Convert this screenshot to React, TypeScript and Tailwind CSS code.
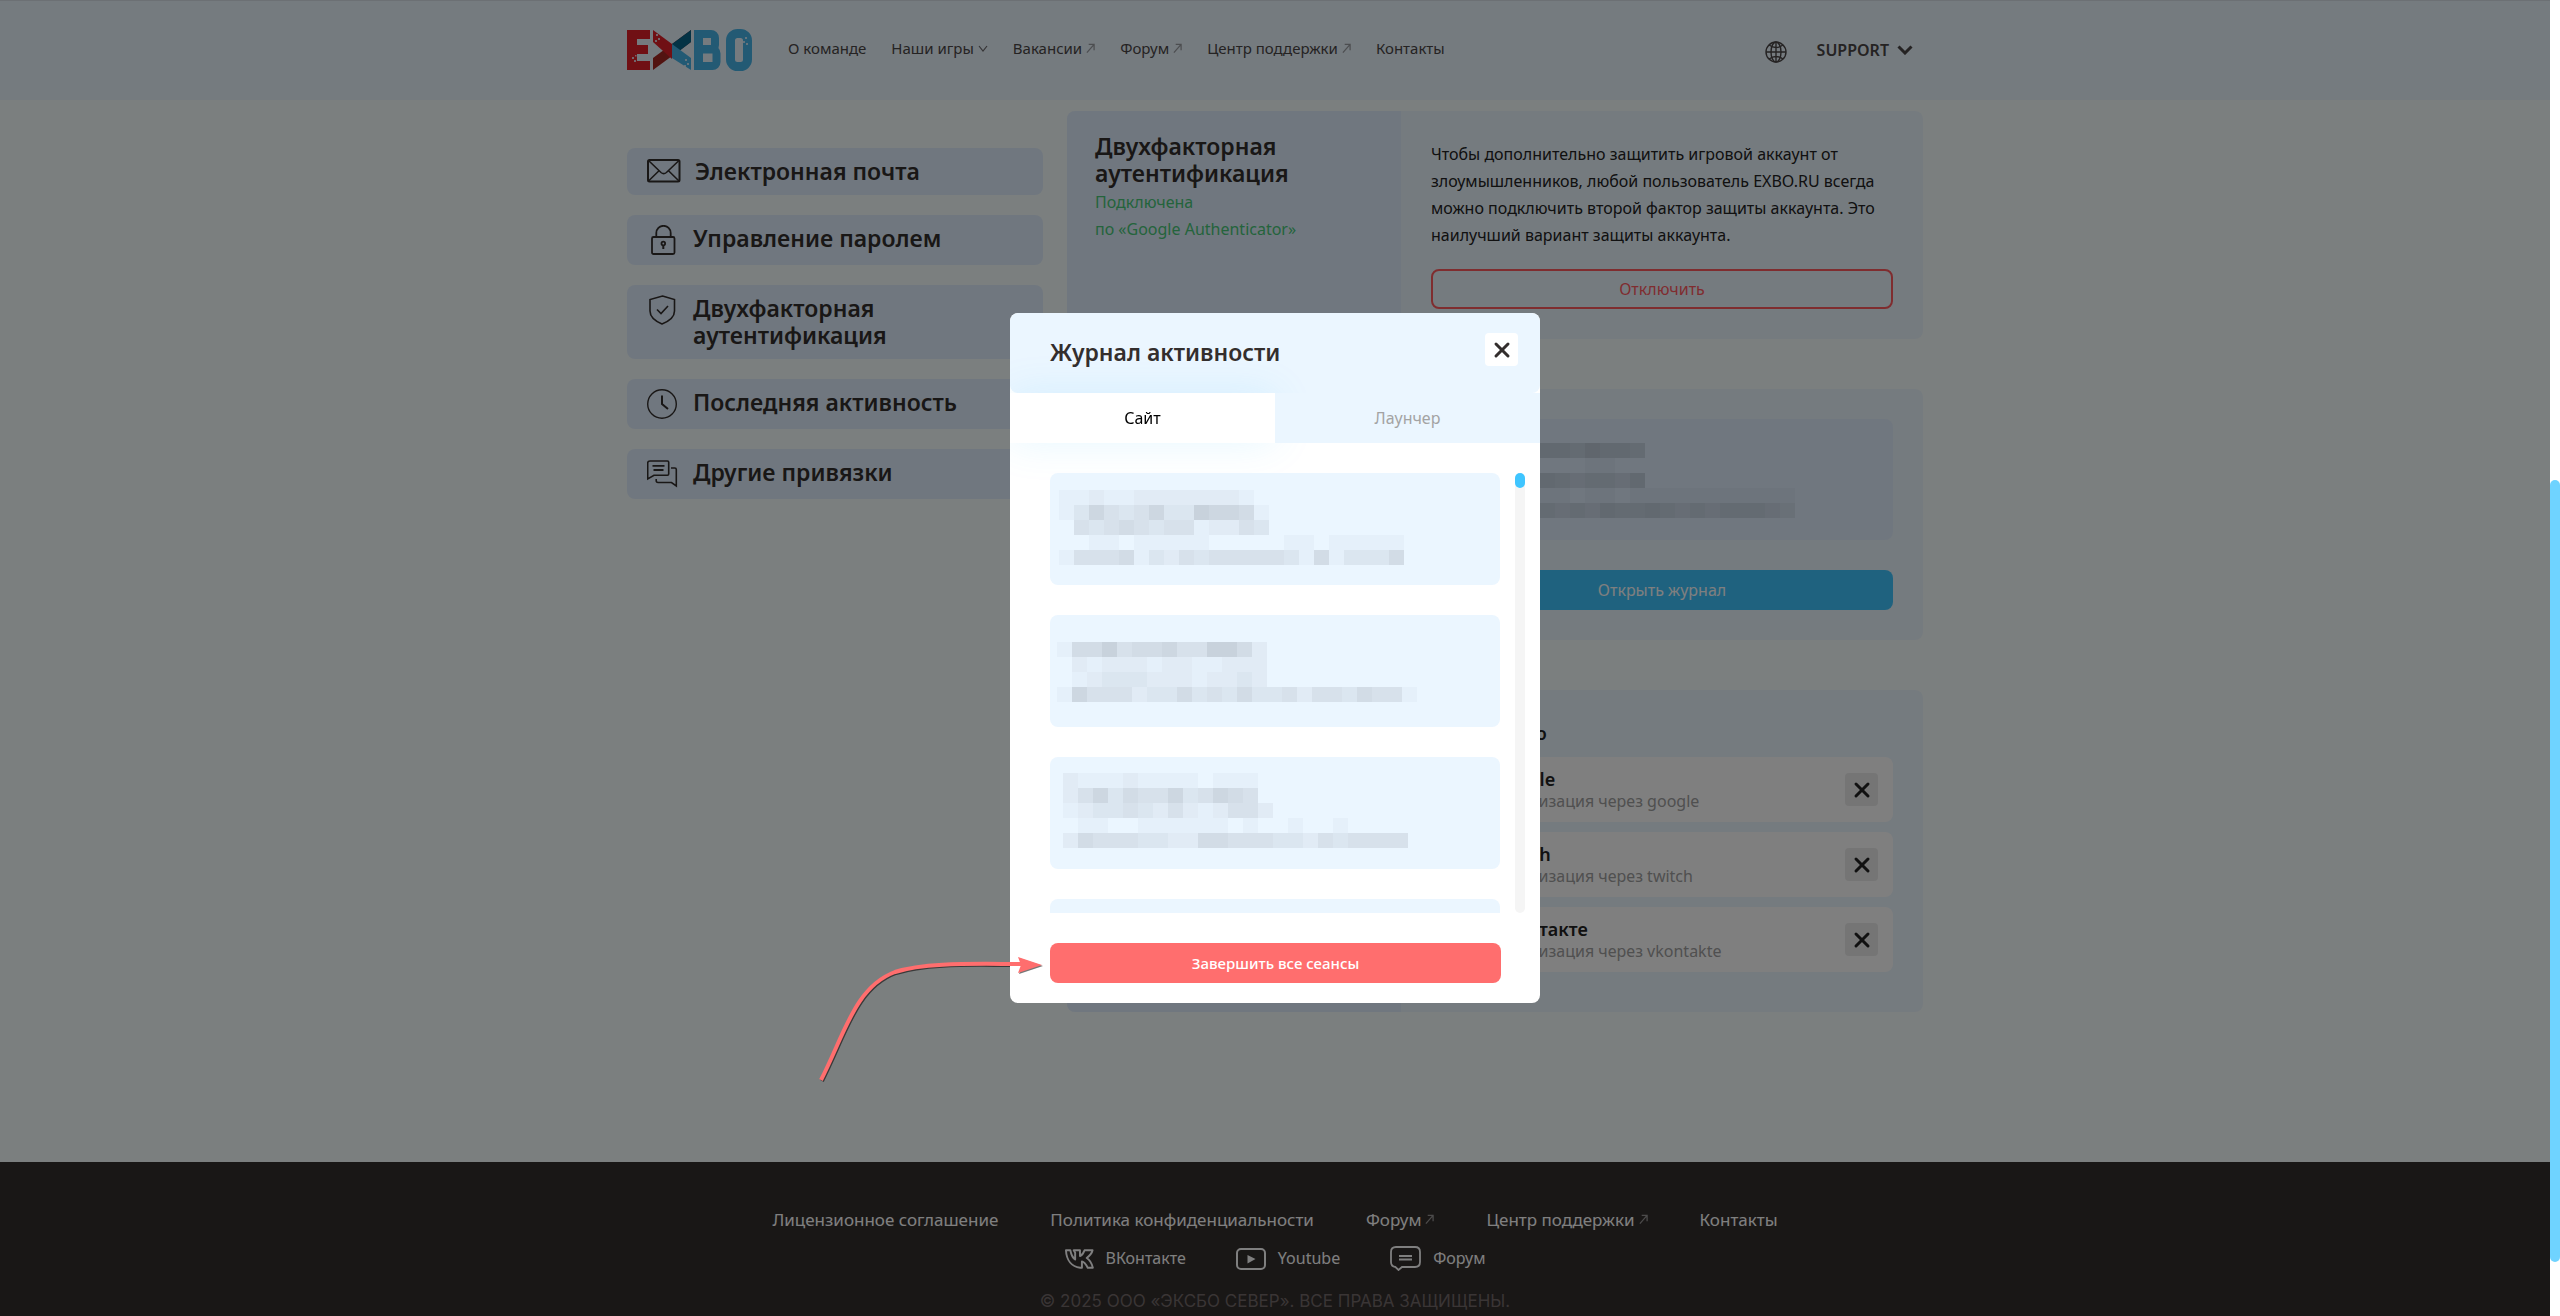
import { useState } from "react"
import { X } from "lucide-react"

const SIDEBAR = [
  { title: "Электронная почта", icon: MailIcon },
  { title: "Управление паролем", icon: LockIcon },
  { title: "Двухфакторная аутентификация", icon: ShieldIcon },
  { title: "Последняя активность", icon: ClockIcon },
  { title: "Другие привязки", icon: ChatIcon },
]

const PROVIDERS = [
  { name: "Google", id: "google" },
  { name: "Twitch", id: "twitch" },
  { name: "ВКонтакте", id: "vkontakte" },
]

// Each digit is the darkness of one censored cell
const SESSIONS = [
  {
    pad: "pl-[9px] pt-[17px]",
    rows: ["1121122222221", "13643463376651", "04345434412243", "00110111110000011011111", "14445132434444431513335"],
  },
  {
    pad: "pl-[7px] pt-[27px]",
    rows: ["15574556447752", "02122212211222", "01233322212232", "164442335343533424435441"],
  },
  {
    pad: "pl-[13px] pt-4",
    rows: ["2111211110111", "2463544634654", "12334324212442", "01100111111010010010000", "25444332255444332434444"],
  },
  { pad: "pl-[9px] pt-[17px]", rows: [] },
]

const LAST_SESSION = ["6655656657665", "0000000001100", "4556656545546", "00001111011011111111111", "45564554546556545455543"]

function Censored({ rows }: { rows: string[] }) {
  return (
    <div aria-hidden="true">
      {rows.map((row, i) => (
        <div key={i} className="flex">
          {row.split("").map((level, j) => (
            <span key={j} className="h-[15px] w-[15px] bg-[#464b5a]" style={{ opacity: Number(level) * 0.03 }} />
          ))}
        </div>
      ))}
    </div>
  )
}

function MailIcon() {
  return (
    <svg width="34" height="24" viewBox="0 0 34 24" fill="none" stroke="currentColor" strokeWidth="2" className="mt-px">
      <rect x="1" y="1" width="31.500" height="21.500" rx="1.500" />
      <path d="M1.500 1.500 14 13.500q2.700 2.200 5.400 0L32 1.500M1.500 22 12 11.800M32 22 21.500 11.800" strokeWidth="1.600" />
    </svg>
  )
}

function LockIcon() {
  return (
    <svg width="32" height="30" viewBox="0 0 32 30" fill="none" stroke="currentColor" strokeWidth="1.800">
      <rect x="5" y="12" width="22.500" height="17" rx="1.500" />
      <path d="M9.300 12V8a7.200 7.200 0 0 1 14.400 0v4" />
      <circle cx="16.300" cy="18.500" r="1.800" />
      <path d="M16.300 20.500V24" strokeWidth="2" />
    </svg>
  )
}

function ShieldIcon() {
  return (
    <svg width="32" height="30" viewBox="0 0 32 30" fill="none" stroke="currentColor" strokeWidth="1.600" className="shrink-0">
      <path d="M15.500 1 27.500 4.500V16c0 6-5 10-12.500 13C8 26 3 22 3 16V4.500Z" />
      <path d="m10 14.500 4 4 7-7.500" />
    </svg>
  )
}

function ClockIcon() {
  return (
    <svg width="32" height="30" viewBox="0 0 32 30" fill="none" stroke="currentColor" strokeWidth="1.400">
      <circle cx="15" cy="15" r="14.300" />
      <path d="M15 6.500V15l6 5" strokeWidth="2" />
    </svg>
  )
}

function ChatIcon() {
  return (
    <svg width="32" height="30" viewBox="0 0 32 30" fill="none" stroke="currentColor" strokeWidth="1.600">
      <path d="M3 2h17.500a1.200 1.200 0 0 1 1.200 1.200V15q0 1.200-1.200 1.200H7L.7 20V4Q.7 2 3 2Z" />
      <path d="M5.500 6.800h12M6.500 11h10" strokeWidth="1.800" />
      <path d="M24 9h3.800q1.500 0 1.500 1.500V27l-4.800-3.500H11q-1.800 0-1.800-2V20" />
    </svg>
  )
}

function ExternalArrow() {
  return (
    <svg width="9" height="11" viewBox="0 0 10 11" fill="none" stroke="currentColor" strokeWidth="1.400" className="opacity-50">
      <path d="M1 10 9 1M3 1h6v6.500" />
    </svg>
  )
}

function Logo() {
  return (
    <svg width="125" height="42" viewBox="0 0 125 42" role="img" aria-label="EXBO">
      <g fill="#e02028">
        <rect y="1" width="10" height="40" />
        <rect y="1" width="23" height="9" />
        <rect y="16" width="21" height="9" />
        <rect y="32" width="23" height="9" />
      </g>
      <path d="M26 41V29L64 1v12Z" fill="#a42822" />
      <path d="M45 15 64 1v12L51 23Z" fill="#08668a" />
      <path d="M26 1 45 15v15L26 13Z" fill="#e02028" />
      <path d="M45 15 64 29v12L45 29Z" fill="#46b4e8" />
      <g fill="none" stroke="#46b4e8">
        <rect x="67" y="1" width="9" height="40" fill="#46b4e8" stroke="none" />
        <rect x="71.500" y="5" width="16.500" height="15" rx="4" strokeWidth="8" />
        <rect x="71.500" y="20.500" width="18" height="16.500" rx="4" strokeWidth="8" />
        <rect x="103.500" y="4.500" width="17" height="33" rx="7" strokeWidth="9" />
      </g>
      <g fill="#ebf6ff" opacity=".8">
        <rect x="5" y="28" width="2" height="2" />
        <rect x="8" y="26" width="1.500" height="1.500" />
        <rect x="7" y="31" width="2" height="2" />
        <rect x="29" y="5" width="2" height="2" />
        <rect x="31" y="9" width="2" height="2" />
        <rect x="28" y="11" width="2" height="2" />
        <rect x="58" y="30" width="2" height="2" />
        <rect x="60" y="34" width="2" height="2" />
        <rect x="57" y="36" width="2" height="2" />
        <rect x="118" y="8" width="2" height="2" />
        <rect x="116" y="12" width="2" height="2" />
        <rect x="119" y="14" width="2" height="2" />
      </g>
    </svg>
  )
}

function Header() {
  const link = "flex items-center gap-1 hover:opacity-70"
  return (
    <header className="border-t border-[#d8e0e8] bg-[#ebf6ff] text-[#4a4646]">
      <div className="mx-auto flex h-[99px] max-w-[1296px] items-center pb-0.5">
        <a href="#">
          <Logo />
        </a>
        <nav className="ml-9 flex items-center gap-[25px] pb-0.5 text-[15px]">
          <a href="#team" className={link}>О команде</a>
          <button className={link}>
            Наши игры
            <svg width="10" height="7" viewBox="0 0 10 7" fill="none" stroke="currentColor" strokeWidth="1.200" className="opacity-80">
              <path d="m1 1 4 5 4-5" />
            </svg>
          </button>
          <a href="#jobs" className={link}>Вакансии <ExternalArrow /></a>
          <a href="#forum" className={link}>Форум <ExternalArrow /></a>
          <a href="#support" className={link}>Центр поддержки <ExternalArrow /></a>
          <a href="#contacts" className={link}>Контакты</a>
        </nav>
        <div className="ml-auto mr-[10px] flex items-center gap-[30px]">
          <button aria-label="Язык" className="mt-1">
            <svg width="22" height="22" viewBox="0 0 22 22" fill="none" stroke="currentColor" strokeWidth="1.400">
              <circle cx="11" cy="11" r="10" />
              <ellipse cx="11" cy="11" rx="5" ry="10" />
              <path d="M11 1v20M1 11h20M4 4q7 5 14 0M4 18q7-5 14 0" />
            </svg>
          </button>
          <button className="flex items-center gap-2 text-base font-semibold">
            SUPPORT
            <svg width="16" height="10" viewBox="0 0 16 10" fill="none" stroke="currentColor" strokeWidth="3">
              <path d="m1.500 1.500 6.500 6.500 6.500-6.500" />
            </svg>
          </button>
        </div>
      </div>
    </header>
  )
}

function Panel({ title, children }: { title?: React.ReactNode; children: React.ReactNode }) {
  return (
    <section className="flex overflow-hidden rounded-lg bg-[#ebf6ff]">
      <div className="w-[334px] bg-[#e1effe] px-7 pt-[22px]">{title}</div>
      <div className="flex-1 p-[30px]">{children}</div>
    </section>
  )
}

function Footer() {
  const link = "flex items-center gap-1 hover:opacity-70"
  return (
    <footer className="flex flex-1 flex-col items-center bg-[#332e2d] pt-11 text-base text-white">
      <nav className="flex gap-[52px] text-[17px] leading-[27px]">
        <a href="#license" className={link}>Лицензионное соглашение</a>
        <a href="#privacy" className={link}>Политика конфиденциальности</a>
        <a href="#forum" className={link}>Форум <ExternalArrow /></a>
        <a href="#support" className={link}>Центр поддержки <ExternalArrow /></a>
        <a href="#contacts" className={link}>Контакты</a>
      </nav>
      <div className="mt-3 flex gap-[50px] leading-[27px]">
        <a href="#vk" className="flex items-center gap-3">
          <svg width="29" height="20" viewBox="0 0 30 20" fill="none" stroke="currentColor" strokeWidth="2" strokeLinejoin="round">
            <path d="M1 1h4.500c1 5 2.500 8 5 9.500V3.500L9 1h6.500v6c2-.8 3.500-3 4.700-6H25h3.500c-.6 3-3.500 6-6 8 3 1.800 5 5 6.300 10h-5.300c-1.800-3.500-3.800-6-6-6.500V19h-1.800C7 18 1.500 11.500 1 1Z" />
          </svg>
          ВКонтакте
        </a>
        <a href="#youtube" className="flex items-center gap-3">
          <svg width="30" height="22" viewBox="0 0 30 22" fill="none" stroke="currentColor" strokeWidth="2">
            <rect x="1" y="1" width="28" height="20" rx="4" />
            <path d="m11.500 7 8 4-8 4.500Z" fill="currentColor" stroke="none" />
          </svg>
          Youtube
        </a>
        <a href="#forum" className="flex items-center gap-3">
          <svg width="31" height="25" viewBox="0 0 31 25" fill="none" stroke="currentColor" strokeWidth="1.800">
            <path d="M6 1h19q5 0 5 5v10q0 5-5 5H12l-3.500 3L5.500 21Q1 20.500 1 16V6q0-5 5-5Z" />
            <path d="M9 10h13M9 13.500h13" />
          </svg>
          Форум
        </a>
      </div>
      <p className="mt-4 font-['Inter','Liberation_Sans',sans-serif] text-[17px] leading-[27px] text-[#746a6a]">
        © 2025 ООО «ЭКСБО СЕВЕР». ВСЕ ПРАВА ЗАЩИЩЕНЫ.
      </p>
    </footer>
  )
}

function ActivityDialog() {
  const [tab, setTab] = useState("site")
  const active = "relative bg-white text-black shadow-[0_0_40px_rgba(63,197,255,0.13)]"
  const idle = "relative z-10 bg-[#ebf6ff] text-[#a3a3a3]"

  return (
    <div className="fixed inset-y-0 left-0 right-[10px] flex items-center justify-center bg-black/50">
      <div className="relative w-[530px]">
        <div role="dialog" aria-labelledby="log-title" className="overflow-hidden rounded-lg bg-white">
          <div className="flex h-20 items-start justify-between rounded-lg bg-[#ebf6ff] pl-10 pr-[22px] pt-5">
            <h2 id="log-title" className="pt-[6px] text-[23px] font-semibold leading-[27px] text-[#332e2d]">
              Журнал активности
            </h2>
            <button aria-label="Закрыть" className="flex h-[33px] w-[33px] items-center justify-center rounded bg-white text-[#332e2d]">
              <X size={24} strokeWidth={3} />
            </button>
          </div>

          <div role="tablist" className="grid h-[50px] grid-cols-2 text-base">
            <button role="tab" aria-selected={tab === "site"} onClick={() => setTab("site")} className={tab === "site" ? active : idle}>
              Сайт
            </button>
            <button role="tab" aria-selected={tab === "launcher"} onClick={() => setTab("launcher")} className={tab === "launcher" ? active : idle}>
              Лаунчер
            </button>
          </div>

          <div className="relative mt-[30px] flex h-[440px] justify-between pl-10 pr-[15px]">
            <ul className="flex w-[450px] flex-col gap-[30px] overflow-hidden">
              {SESSIONS.map((session, i) => (
                <li key={i} className={`h-28 shrink-0 rounded-lg bg-[#ebf6ff] ${session.pad}`}>
                  <Censored rows={session.rows} />
                </li>
              ))}
            </ul>
            <div className="w-[10px] rounded-full bg-[#f5f5f5]">
              <div className="h-[15px] rounded-full bg-[#3fc5ff]" />
            </div>
          </div>

          <div className="pb-5 pl-10 pr-[39px] pt-[30px]">
            <button className="h-10 w-full rounded-lg bg-[#ff6e6e] text-[15px] font-medium text-white">Завершить все сеансы</button>
          </div>
        </div>

        {/* Hand-drawn pointer to the logout button */}
        <svg
          width="230"
          height="138"
          viewBox="818 950 230 138"
          fill="none"
          aria-hidden="true"
          className="pointer-events-none absolute -bottom-[85px] -left-[192px]"
        >
          <path d="M822 1081C846 1034 856 988 896 973 926 963 976 965 1010 965" stroke="#3a3a3a" strokeWidth="4" />
          <path d="m1019 958 24 8-24 8 3-8Z" fill="#777" />
          <path d="M821 1080C845 1033 855 987 895 972 925 962 975 964 1022 964" stroke="#ff6e6e" strokeWidth="4" />
          <path d="m1018 957 24 8-24 8 3-8Z" fill="#ff6e6e" />
        </svg>
      </div>
    </div>
  )
}

export default function App() {
  return (
    <div className="flex min-h-screen flex-col bg-[#f7ffff] pr-[10px] font-['Noto_Sans','Open_Sans',sans-serif] text-[#222]">
      <Header />

      <main className="mx-auto flex w-full max-w-[1296px] items-start gap-6 pb-[150px]">
        <aside className="mt-12 flex w-[416px] flex-col gap-5">
          {SIDEBAR.map(({ title, icon: Icon }) => (
            <a
              key={title}
              href="#"
              className="flex items-start gap-[14px] rounded-lg bg-[#e1effe] px-5 py-[10px] text-[23px] font-semibold leading-[27px] text-[#332e2d]"
            >
              <Icon />
              {title}
            </a>
          ))}
        </aside>

        <div className="mt-[11px] flex flex-1 flex-col gap-[50px]">
          <Panel
            title={
              <>
                <h2 className="text-[23px] font-semibold leading-[27px] text-[#332e2d]">Двухфакторная аутентификация</h2>
                <p className="mt-0.5 text-base leading-[27px] text-[#48c878]">
                  Подключена
                  <br />
                  по «Google Authenticator»
                </p>
              </>
            }
          >
            <p className="text-base leading-[27px]">
              Чтобы дополнительно защитить игровой аккаунт от злоумышленников, любой пользователь EXBO.RU всегда можно
              подключить второй фактор защиты аккаунта. Это наилучший вариант защиты аккаунта.
            </p>
            <button className="mt-5 h-10 w-full rounded-lg border-2 border-[#ff5a5f] text-base text-[#ff5a5f]">Отключить</button>
          </Panel>

          <Panel>
            <div className="h-[121px] rounded-lg bg-[#e1effe] pl-[19px] pt-6">
              <Censored rows={LAST_SESSION} />
            </div>
            <button className="mt-[30px] h-10 w-full rounded-lg bg-[#3fc5ff] text-base text-white">Открыть журнал</button>
          </Panel>

          <Panel>
            <h3 className="text-lg font-semibold leading-[27px]">Подключено</h3>
            <ul className="mb-[10px] mt-[10px] flex flex-col gap-[10px]">
              {PROVIDERS.map((provider) => (
                <li key={provider.id} className="flex h-[65px] items-center justify-between rounded-lg bg-white pl-[62px] pr-[15px]">
                  <div>
                    <h4 className="text-lg font-semibold leading-[22px]">{provider.name}</h4>
                    <p className="text-base leading-[22px] text-[#a0a0a0]">Авторизация через {provider.id}</p>
                  </div>
                  <button aria-label={`Отвязать ${provider.name}`} className="flex h-[33px] w-[33px] items-center justify-center rounded bg-[#ebebeb]">
                    <X size={24} strokeWidth={3} />
                  </button>
                </li>
              ))}
            </ul>
          </Panel>
        </div>
      </main>

      <Footer />
      <ActivityDialog />

      {/* Page scrollbar */}
      <div className="fixed inset-y-0 right-0 w-[10px] bg-white pt-[480px]">
        <div className="h-[782px] rounded-full bg-[#6fd3ff]" />
      </div>
    </div>
  )
}
